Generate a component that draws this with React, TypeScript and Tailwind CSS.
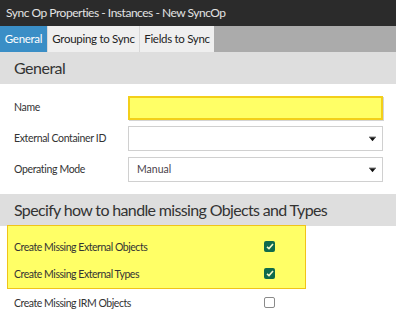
import React from "react";

function Caret() {
  return (
    <svg width="7" height="5" viewBox="0 0 7 5" className="absolute right-[6px] top-1/2 -translate-y-1/2">
      <rect x="0" y="0" width="7" height="1" fill="#111" />
      <path d="M0.5 1 H6.5 L3.5 4.8 Z" fill="#111" />
    </svg>
  );
}

function Check({ checked }: { checked: boolean }) {
  if (!checked) {
    return <div className="h-[11px] w-[11px] rounded-[2px] border border-[#8a8a8a] bg-white" />;
  }
  return (
    <div className="flex h-[11px] w-[11px] items-center justify-center rounded-[2px] bg-[#0f6a4c]">
      <svg width="8" height="7" viewBox="0 0 8 7">
        <path d="M1 3.8 L3 5.6 L7 1" fill="none" stroke="#f6f8c8" strokeWidth="1.6" />
      </svg>
    </div>
  );
}

function FormRow({ label, children }: { label: string; children: React.ReactNode }) {
  return (
    <div className="mb-[6px] flex h-[25px] items-center">
      <div className="w-[128px] whitespace-nowrap pl-[14px] text-[10.5px] tracking-[-0.35px] text-[#333]">{label}</div>
      {children}
    </div>
  );
}

function CheckRow({ label, checked, inset }: { label: string; checked: boolean; inset?: boolean }) {
  return (
    <div className={`flex h-[27px] items-center ${inset ? "pl-[6px]" : "pl-[14px]"}`}>
      <div className="w-[250px] whitespace-nowrap text-[10.5px] tracking-[-0.45px] text-[#333]">{label}</div>
      <div className="-mt-[3px]">
        <Check checked={checked} />
      </div>
    </div>
  );
}

export default function App() {
  return (
    <div className="h-[315px] w-[396px] overflow-hidden bg-white font-['Lato',sans-serif]">
      <div className="flex h-[26px] items-center whitespace-nowrap bg-[#2b2b2b] pl-[6px] text-[12px] tracking-[-0.04em] text-[#e2e2e2]">
        Sync Op Properties - Instances - New SyncOp
      </div>

      <div className="flex h-[26px] whitespace-nowrap bg-[#ababab] text-[11.5px] tracking-[-0.3px]">
        <div className="flex w-[47px] items-center justify-center bg-[#3a8ec6] text-white">General</div>
        <div className="flex w-[92px] items-center justify-center border-l border-[#d8d8d8] bg-[#efefef] text-[#222]">
          Grouping to Sync
        </div>
        <div className="flex w-[75px] items-center justify-center border-l border-[#d8d8d8] bg-[#efefef] text-[#222]">
          Fields to Sync
        </div>
      </div>

      <div className="flex h-[32px] items-center bg-[#dedede] pl-[14px] text-[16px] tracking-[-0.5px] text-[#333]">General</div>

      <div className="pt-[11px] pb-[6px]">
        <FormRow label="Name">
          <div className="h-[24px] w-[255px] border-2 border-[#f3cf1a] bg-[#ffff66] shadow-[1px_1px_0_#d4d4d4]" />
        </FormRow>
        <FormRow label="External Container ID">
          <div className="relative h-[25px] w-[255px] border border-[#d0d0d0] bg-white">
            <Caret />
          </div>
        </FormRow>
        <FormRow label="Operating Mode">
          <div className="relative flex h-[25px] w-[255px] items-center border border-[#d0d0d0] bg-white pl-[8px] text-[10.5px] text-[#4a3f4a]">
            Manual
            <Caret />
          </div>
        </FormRow>
      </div>

      <div className="flex h-[32px] items-center whitespace-nowrap bg-[#dedede] pl-[14px] text-[16px] tracking-[-0.65px] text-[#333]">
        Specify how to handle missing Objects and Types
      </div>

      <div className="-mt-px ml-[7px] h-[64px] w-[299px] border border-[#f0c419] bg-[#ffff66] pt-[8px]">
        <CheckRow label="Create Missing External Objects" checked inset />
        <CheckRow label="Create Missing External Types" checked inset />
      </div>
      <div className="pt-[1px]">
        <CheckRow label="Create Missing IRM Objects" checked={false} />
      </div>
    </div>
  );
}
